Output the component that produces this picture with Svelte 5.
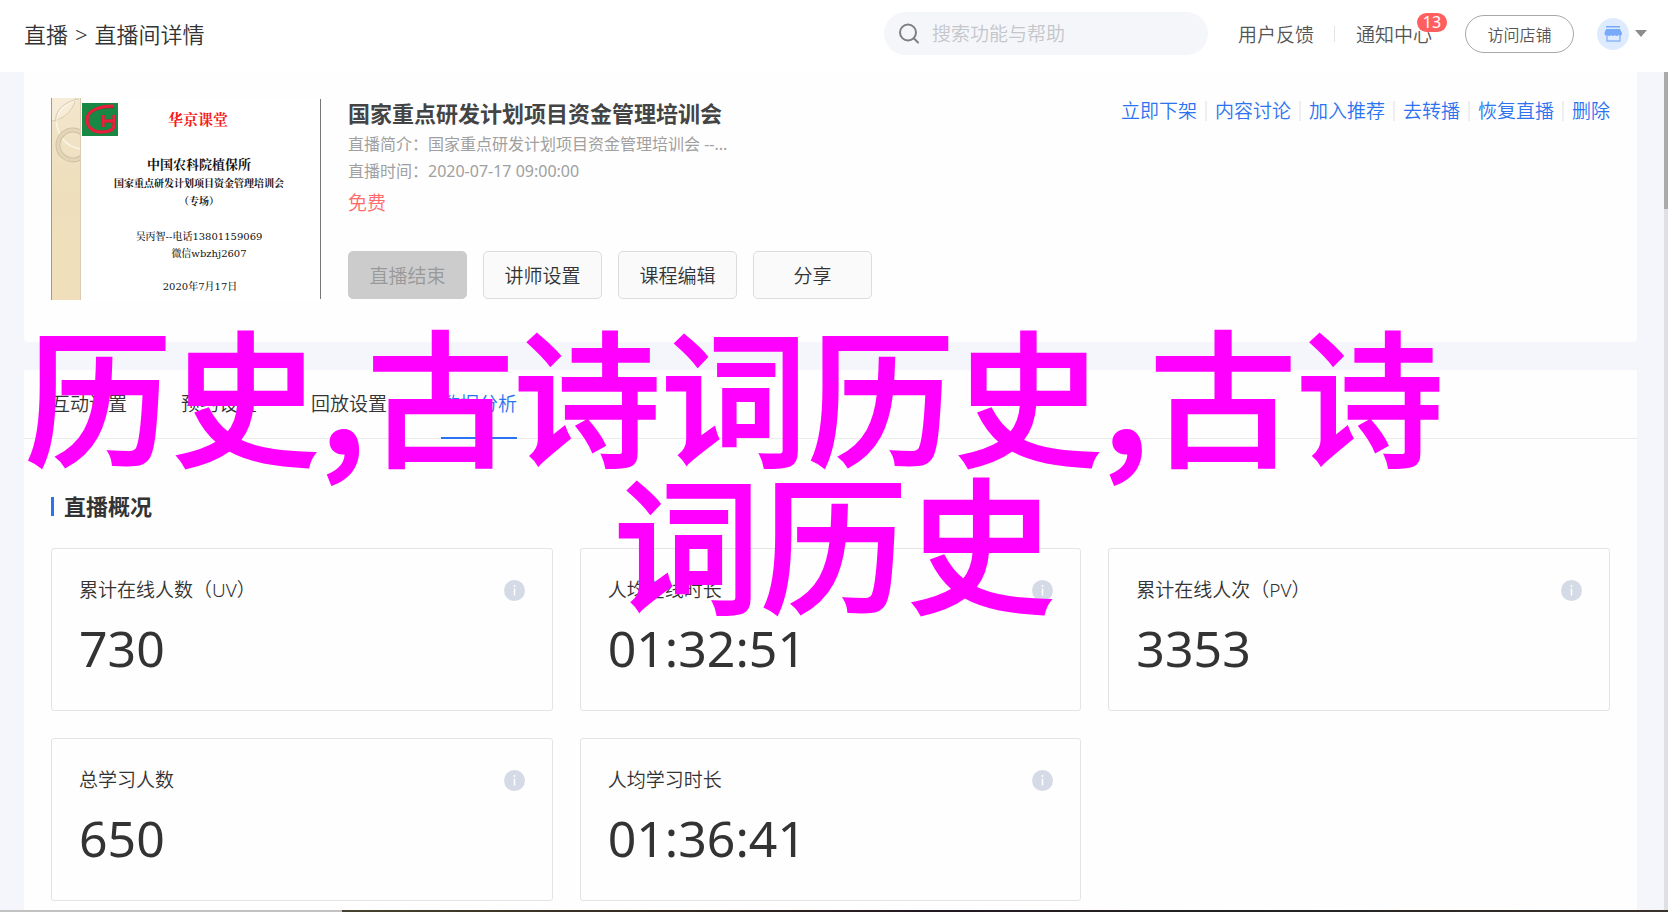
<script lang="ts">
  interface Stat {
    label: string;
    value: string;
  }

  const actions = ["立即下架", "内容讨论", "加入推荐", "去转播", "恢复直播", "删除"];
  const tabs = ["互动设置", "预约设置", "回放设置", "数据分析"];
  const stats: Stat[] = [
    { label: "累计在线人数（UV）", value: "730" },
    { label: "人均在线时长", value: "01:32:51" },
    { label: "累计在线人次（PV）", value: "3353" },
    { label: "总学习人数", value: "650" },
    { label: "人均学习时长", value: "01:36:41" },
  ];

  let activeTab = $state("数据分析");
  let keyword = $state("");
</script>

<div class="page">
  <header class="topbar">
    <nav class="breadcrumb" aria-label="面包屑">
      <a href="#live">直播</a>
      <span>&gt;</span>
      <span>直播间详情</span>
    </nav>

    <div class="tools">
      <label class="search">
        <svg width="22" height="22" viewBox="0 0 22 22" fill="none" stroke="#808080" stroke-width="2" aria-hidden="true">
          <circle cx="10" cy="9.500" r="8" />
          <path d="M16 15.500l4 4" stroke-linecap="round" />
        </svg>
        <input type="text" bind:value={keyword} placeholder="搜索功能与帮助" aria-label="搜索功能与帮助" />
      </label>
      <a class="tool-link" href="#feedback">用户反馈</a>
      <span class="tool-divider"></span>
      <a class="tool-link notice" href="#notice">通知中心<span class="badge">13</span></a>
      <button class="visit" type="button">访问店铺</button>
      <button class="account" type="button" aria-label="账号">
        <svg width="32" height="32" viewBox="0 0 32 32" aria-hidden="true">
          <circle cx="16" cy="16" r="16" fill="#deebff" />
          <rect x="9" y="8" width="14" height="1.500" fill="#77aaf8" />
          <path d="M9 11h14l2 4v1a2 2 0 0 1-3.500 1 2.200 2.200 0 0 1-3.600 0 2.200 2.200 0 0 1-3.800 0 2.200 2.200 0 0 1-3.600 0A2 2 0 0 1 7.500 16v-1z" fill="#77aaf8" />
          <path d="M10 17v6h13v-6" fill="none" stroke="#8db8f9" stroke-width="1.500" />
        </svg>
        <svg width="12" height="8" viewBox="0 0 12 8" aria-hidden="true">
          <path d="M0 0h12L6 7z" fill="#8c8c8c" />
        </svg>
      </button>
    </div>
  </header>

  <main>
    <section class="panel summary">
      <svg class="cover" width="270" height="202" viewBox="0 0 270 202" role="img" aria-label="课程封面">
        <defs>
          <clipPath id="strip"><rect width="30" height="202" /></clipPath>
          <linearGradient id="sand" x1="0" y1="0" x2="0" y2="1">
            <stop offset="0" stop-color="#f2e6cd" />
            <stop offset="0.4" stop-color="#eedfbd" />
            <stop offset="1" stop-color="#f0dfba" />
          </linearGradient>
        </defs>
        <rect width="270" height="202" fill="#fff" />
        <g clip-path="url(#strip)" fill="none">
          <rect width="30" height="202" fill="url(#sand)" />
          <circle cx="-2" cy="-4" r="27" fill="#f6ecd8" stroke="#d9ccb0" />
          <path d="M28 1C10 6 2 18 7 32s14 18 24 19" stroke="#fbf5e8" stroke-width="1.500" />
          <path d="M28 1C14 3 3 13 5 24" stroke="#d6c8aa" />
          <circle cx="22" cy="47" r="15" stroke="#d0c1a1" stroke-width="5" />
          <circle cx="22" cy="47" r="15" stroke="#e2d5b8" stroke-width="3" />
          <path d="M0 0v202" stroke="#a49b89" stroke-width="2" />
          <path d="M29.500 0v202" stroke="#d9ccb1" />
        </g>
        <rect x="31" y="5" width="36" height="33" fill="#198844" />
        <path d="M63 9C49 8 36 12 36 22c0 7 6 12 14 12 9 0 13-3 13-7V17M52 17v12M52 23h10" fill="none" stroke="#8c2430" stroke-width="3" />
        <path d="M63 8C49 8 36 12 36 22c0 7 6 12 14 12 9 0 13-3 13-7V17M52 17v12M52 23h10" fill="none" stroke="#e8203c" stroke-width="3" />
        <path d="M269.500 1v200" stroke="#777" />
        <g class="cover-text" text-anchor="middle">
          <text class="cover-brand" x="147" y="27">华京课堂</text>
          <text class="cover-org" x="148" y="71">中国农科院植保所</text>
          <text class="cover-course" x="148" y="89">国家重点研发计划项目资金管理培训会</text>
          <text class="cover-course" x="148" y="107">（专场）</text>
          <text x="148" y="142">吴丙智--电话13801159069</text>
          <text x="158" y="159">微信wbzhj2607</text>
          <text x="149" y="192">2020年7月17日</text>
        </g>
      </svg>

      <div class="info">
        <h1>国家重点研发计划项目资金管理培训会</h1>
        <p class="meta">直播简介：国家重点研发计划项目资金管理培训会 --...</p>
        <p class="meta">直播时间：2020-07-17 09:00:00</p>
        <p class="price">免费</p>
        <div class="buttons">
          <button type="button" disabled>直播结束</button>
          <button type="button">讲师设置</button>
          <button type="button">课程编辑</button>
          <button type="button">分享</button>
        </div>
      </div>

      <nav class="actions" aria-label="直播操作">
        {#each actions as action}
          <a href="#action">{action}</a>
        {/each}
      </nav>
    </section>

    <section class="panel analysis">
      <div class="tabs" role="tablist">
        {#each tabs as tab}
          <button
            type="button"
            role="tab"
            aria-selected={activeTab === tab}
            class:active={activeTab === tab}
            onclick={() => (activeTab = tab)}
          >
            {tab}
          </button>
        {/each}
      </div>

      <div class="overview">
        <h2>直播概况</h2>
        <div class="stats">
          {#each stats as stat}
            <article class="stat">
              <div class="stat-head">
                <h3>{stat.label}</h3>
                <svg width="21" height="21" viewBox="0 0 21 21" aria-hidden="true">
                  <circle cx="10.500" cy="10.500" r="10.500" fill="#d4dae6" />
                  <circle cx="10.500" cy="6" r="1" fill="#fff" />
                  <path d="M10.500 8.500v7" stroke="#fff" stroke-width="1.500" />
                </svg>
              </div>
              <p class="stat-value">{stat.value}</p>
            </article>
          {/each}
        </div>
      </div>
    </section>
  </main>

  <div class="scrollbar"><div class="thumb"></div></div>
  <div class="progress"><div class="played"></div></div>

  <div class="caption">
    <p>历史<b>,</b>古诗词历史<b>,</b>古诗</p>
    <p class="centered">词历史</p>
  </div>
</div>

<style>
  :global(body) {
    margin: 0;
    background: #f5f6fb;
  }

  .page {
    position: relative;
    display: flex;
    flex-direction: column;
    height: 100vh;
    overflow: hidden;
    font-family: "Noto Sans", "Noto Sans CJK SC", sans-serif;
    font-size: 19px;
    font-weight: 350;
    color: #333;
  }

  h1,
  h2,
  h3,
  p {
    margin: 0;
  }

  a {
    color: inherit;
    text-decoration: none;
  }

  button,
  input {
    padding: 0;
    border: 0;
    background: none;
    font: inherit;
    color: inherit;
  }

  button {
    cursor: pointer;
  }

  .topbar {
    display: flex;
    flex: none;
    align-items: center;
    justify-content: space-between;
    box-sizing: border-box;
    height: 72px;
    padding: 0 21px 5px 24px;
    background: #fff;
  }

  .breadcrumb {
    display: flex;
    gap: 7px;
    font-size: 22px;
    line-height: 32px;
  }

  .tools {
    display: flex;
    align-items: center;
    color: #555;
  }

  .search {
    display: flex;
    align-items: center;
    gap: 12px;
    box-sizing: border-box;
    width: 324px;
    height: 43px;
    margin-right: 30px;
    padding: 0 14px;
    border-radius: 22px;
    background: #f5f6fa;
  }

  .search input {
    flex: 1;
    min-width: 0;
    outline: none;
  }

  .search input::placeholder {
    color: #c4c6ca;
  }

  .tool-divider {
    width: 1px;
    height: 16px;
    margin: 0 21px 0 20px;
    background: #e4e4e4;
  }

  .notice {
    position: relative;
  }

  .badge {
    position: absolute;
    top: -7px;
    left: 61px;
    width: 30px;
    border-radius: 10px;
    background: #ff5f5f;
    color: #fff;
    font-size: 16px;
    font-weight: 400;
    line-height: 19px;
    text-align: center;
  }

  .visit {
    box-sizing: border-box;
    width: 109px;
    height: 38px;
    margin: 0 23px 0 33px;
    border: 1px solid #a8a8a8;
    border-radius: 19px;
    font-size: 16px;
  }

  .account {
    display: flex;
    align-items: center;
    gap: 6px;
  }

  main {
    flex: 1;
    min-height: 0;
    padding: 0 31px 0 24px;
    overflow: hidden;
  }

  .panel {
    background: #fefefe;
  }

  .summary {
    display: flex;
    box-sizing: border-box;
    min-height: 270px;
    margin-bottom: 28px;
    padding: 26px 27px;
    border-radius: 0 0 4px 4px;
  }

  .cover {
    flex: none;
    margin-right: 27px;
  }

  .cover-text {
    font-family: "DejaVu Serif", "Noto Serif CJK SC", "Noto Sans CJK SC", serif;
    font-size: 10px;
    font-weight: 500;
    fill: #111;
  }

  .cover-brand {
    font-size: 15px;
    font-weight: 700;
    fill: #f61c1c;
  }

  .cover-org {
    font-size: 13px;
    font-weight: 700;
  }

  .cover-course {
    font-weight: 700;
  }

  .info {
    flex: 1;
    min-width: 0;
  }

  h1 {
    margin-bottom: 3px;
    font-size: 22px;
    font-weight: 700;
    line-height: 30px;
    color: #444;
  }

  .meta {
    font-size: 16px;
    font-weight: 400;
    line-height: 27px;
    color: #a0a0a0;
  }

  .price {
    margin-top: 5px;
    line-height: 27px;
    color: #ff6b6b;
  }

  .buttons {
    display: flex;
    gap: 16px;
    margin-top: 34px;
  }

  .buttons button {
    box-sizing: border-box;
    width: 119px;
    height: 48px;
    border: 1px solid #dcdcdc;
    border-radius: 5px;
    background: #fafafa;
  }

  .buttons button:disabled {
    border-color: #ccc;
    background: #ccc;
    color: #999;
    cursor: not-allowed;
  }

  .actions {
    display: flex;
    align-self: flex-start;
    line-height: 26px;
    color: #2b73f0;
  }

  .actions a + a {
    margin-left: 8px;
    padding-left: 10px;
    background: linear-gradient(#eee, #eee) left center / 2px 20px no-repeat;
  }

  .tabs {
    display: flex;
    gap: 54px;
    padding: 0 27px;
    border-bottom: 1px solid #ebebeb;
  }

  .tabs button {
    height: 69px;
    margin-bottom: -1px;
    padding-bottom: 2px;
    border-bottom: 2px solid transparent;
  }

  .tabs .active {
    border-color: #2b73f0;
    color: #2b73f0;
  }

  .overview {
    padding: 51px 27px 27px;
  }

  h2 {
    display: flex;
    align-items: center;
    gap: 10px;
    margin-bottom: 26px;
    font-size: 22px;
    font-weight: 700;
    line-height: 32px;
  }

  h2::before {
    width: 3px;
    height: 19px;
    background: #2b73f0;
    content: "";
  }

  .stats {
    display: grid;
    grid-template-columns: repeat(3, 1fr);
    gap: 27px;
  }

  .stat {
    box-sizing: border-box;
    min-height: 163px;
    padding: 27px;
    border: 1px solid #e4e4e4;
    border-radius: 3px;
  }

  .stat-head {
    display: flex;
    align-items: center;
    justify-content: space-between;
  }

  h3 {
    font-size: 19px;
    font-weight: 350;
    line-height: 28px;
  }

  .stat-value {
    margin-top: 14px;
    font-size: 50px;
    font-weight: 400;
    line-height: 60px;
  }

  .scrollbar {
    position: absolute;
    top: 72px;
    right: 0;
    bottom: 2px;
    width: 4px;
    background: #dfe0e4;
  }

  .thumb {
    height: 137px;
    background: #aaa;
  }

  .progress {
    flex: none;
    height: 2px;
    background: linear-gradient(90deg, #45432f 20%, #35291f 40%, #241a22 55%, #222 75%, #39312b);
  }

  .played {
    width: 342px;
    height: 2px;
    background: #c2c2c2;
  }

  /* Large caption laid over the whole page */
  .caption {
    position: absolute;
    top: 317px;
    right: 25px;
    left: 25px;
    font-family: "Noto Sans CJK SC", sans-serif;
    font-size: 147px;
    font-weight: 500;
    line-height: 147px;
    color: #f0f;
    white-space: nowrap;
    pointer-events: none;
    -webkit-text-stroke: 2px #f0f;
  }

  .caption b {
    font-weight: 700;
    -webkit-text-stroke: 0;
  }

  .centered {
    text-align: center;
  }
</style>
